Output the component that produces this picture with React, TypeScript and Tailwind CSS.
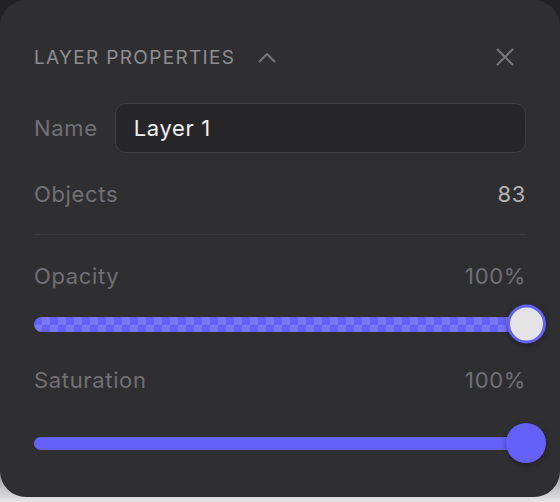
/**
 * Layer Properties panel
 */

import type React from 'react';

interface RowProps {
  label: string;
  value: string;
  valueClass?: string;
}

const ValueRow: React.FC<RowProps> = ({ label, value, valueClass = 'text-[#6f6f75]' }) => (
  <div className="flex h-10 items-center justify-between">
    <span className="text-[22px] tracking-[0.03em] text-[#6f6f75]">{label}</span>
    <span className={`text-[22px] tracking-[0.03em] ${valueClass}`}>{value}</span>
  </div>
);

interface SliderProps {
  checkered?: boolean;
}

const Slider: React.FC<SliderProps> = ({ checkered = false }) => (
  <div className="relative flex h-10 items-center">
    <div
      className={
        checkered
          ? 'h-[15px] w-full rounded-full bg-[conic-gradient(#7a77f4_25%,#6461fb_0_50%,#7a77f4_0_75%,#6461fb_0)] bg-[length:16px_16px]'
          : 'h-[13px] w-full rounded-full bg-[#6461fb]'
      }
    />
    {checkered ? (
      <div className="absolute right-[-20px] top-1/2 h-[39px] w-[39px] -translate-y-1/2 rounded-full border-[3.5px] border-[#6461fb] bg-[#e4e4e7] shadow-[0_2px_6px_rgba(0,0,0,0.35)]" />
    ) : (
      <div className="absolute right-[-20px] top-1/2 h-10 w-10 -translate-y-1/2 rounded-full bg-[#6461fb] shadow-[0_2px_6px_rgba(0,0,0,0.35)]" />
    )}
  </div>
);

export default function App() {
  return (
    <div className="h-[502px] w-[560px] bg-[linear-gradient(#212123_0%,#252527_85%,#e6e6e8_100%)] font-['Inter','Liberation_Sans',sans-serif]">
      <div className="h-[497px] w-full rounded-[26px] bg-[#2f2f31] pl-[34px] pr-[34px] pt-[39px]">
        <div className="flex h-9 items-center justify-between">
          <div className="flex items-center gap-[23px]">
            <h2 className="mt-[2px] text-[19px] font-normal uppercase tracking-[0.07em] text-[#8d8d93]">
              Layer Properties
            </h2>
            <svg aria-hidden="true" width="18" height="12" viewBox="0 0 18 12" fill="none">
              <path d="M1.5 10.5L9 3L16.5 10.5" stroke="#76767c" strokeWidth={2} strokeLinecap="round" strokeLinejoin="round" />
            </svg>
          </div>
          <svg aria-hidden="true" width="18" height="18" viewBox="0 0 18 18" fill="none" className="mr-[12px]">
            <path d="M1.5 1.5L16.5 16.5M16.5 1.5L1.5 16.5" stroke="#76767c" strokeWidth={2} strokeLinecap="round" />
          </svg>
        </div>

        <div className="mt-[28px] flex items-center gap-[17px]">
          <span className="text-[22px] tracking-[0.03em] text-[#6f6f75]">Name</span>
          <div className="flex h-[50px] flex-1 items-center rounded-[11px] border border-[#3f3f44] bg-[#262628] px-[18px]">
            <span className="text-[22px] tracking-[0.03em] text-[#f0f0f2]">Layer 1</span>
          </div>
        </div>

        <div className="mt-[21px]">
          <ValueRow label="Objects" value="83" valueClass="text-[#b2b2b7]" />
        </div>

        <div className="mt-[20px] h-px bg-[#3a3a3d]" />

        <div className="mt-[21px]">
          <ValueRow label="Opacity" value="100%" />
        </div>
        <div className="mt-[8px]">
          <Slider checkered />
        </div>

        <div className="mt-[16px]">
          <ValueRow label="Saturation" value="100%" />
        </div>
        <div className="mt-[23px]">
          <Slider />
        </div>
      </div>
    </div>
  );
}
